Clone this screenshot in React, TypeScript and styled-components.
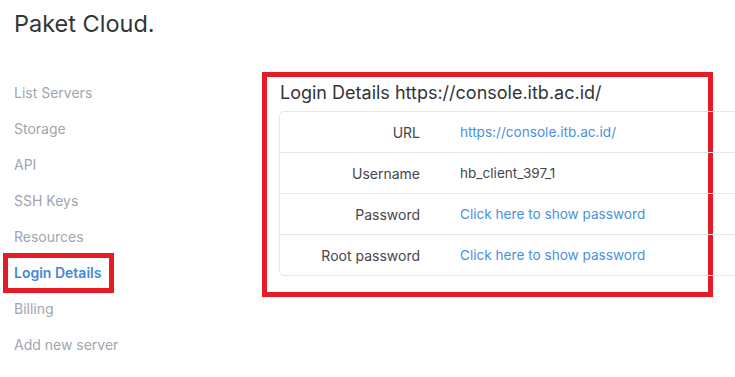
import styled, { createGlobalStyle } from 'styled-components';

const menu = [
  'List Servers',
  'Storage',
  'API',
  'SSH Keys',
  'Resources',
  'Login Details',
  'Billing',
  'Add new server'
];

const details = [
  { label: 'URL', value: 'https://console.itb.ac.id/', link: true },
  { label: 'Username', value: 'hb_client_397_1', link: false },
  { label: 'Password', value: 'Click here to show password', link: true },
  { label: 'Root password', value: 'Click here to show password', link: true }
];

function App() {
  return (
    <>
      <GlobalStyle />
      <Page>
        <Header>Paket Cloud.</Header>
        <Layout>
          <Sidebar>
            {menu.map((item) => (
              <MenuItem key={item} $active={item === 'Login Details'}>
                {item}
              </MenuItem>
            ))}
          </Sidebar>
          <Highlight>
            <CardTitle>Login Details https://console.itb.ac.id/</CardTitle>
            <Table>
              {details.map((row) => (
                <Row key={row.label}>
                  <Label>{row.label}</Label>
                  <Value $link={row.link}>{row.value}</Value>
                </Row>
              ))}
            </Table>
          </Highlight>
        </Layout>
      </Page>
    </>
  );
}

const GlobalStyle = createGlobalStyle`
  body {
    margin: 0;
    background: #ffffff;
    font-family: Inter, "Liberation Sans", sans-serif;
    overflow: hidden;
  }
`;

const Page = styled.div`
  width: 735px;
  height: 377px;
  overflow: hidden;
`;

const Header = styled.h1`
  margin: 0;
  padding: 0 14px;
  height: 72px;
  line-height: 48px;
  font-size: 23.5px;
  font-weight: 400;
  color: #333438;
`;

const Layout = styled.div`
  display: flex;
  align-items: flex-start;
`;

const Sidebar = styled.nav`
  width: 248px;
  padding: 3px 0 0 14px;
  display: flex;
  flex-direction: column;
  align-items: flex-start;
`;

const MenuItem = styled.a<{ $active?: boolean }>`
  display: block;
  height: 36px;
  line-height: 36px;
  font-size: 14px;
  font-weight: ${(p) => (p.$active ? 600 : 400)};
  color: ${(p) => (p.$active ? '#3f88dd' : '#a2a5ae')};
  ${(p) =>
    p.$active &&
    `
    height: 30px;
    line-height: 30px;
    margin: 3px 0 3px -6px;
    padding: 0 8px 0 6px;
    outline: 5px solid #e31c25;
  `}
`;

const Highlight = styled.section`
  width: 451px;
  box-sizing: border-box;
  border: 5px solid #e31c25;
  padding: 3px 0 16px 12px;
`;

const CardTitle = styled.h2`
  margin: 0 0 5px 1px;
  line-height: 26px;
  font-size: 18px;
  font-weight: 400;
  color: #333438;
`;

const Table = styled.div`
  width: 480px;
  border: 1px solid #e6e7ea;
  border-radius: 5px;
`;

const Row = styled.div`
  display: grid;
  grid-template-columns: 160px 1fr;
  height: 40px;
  align-items: center;
  font-size: 14px;
  & + & {
    border-top: 1px solid #e6e7ea;
  }
`;

const Label = styled.span`
  text-align: right;
  padding-right: 20px;
  color: #45464b;
`;

const Value = styled.span<{ $link?: boolean }>`
  padding-left: 20px;
  font-size: 13.6px;
  color: ${(p) => (p.$link ? '#4a8fe0' : '#45464b')};
  cursor: ${(p) => (p.$link ? 'pointer' : 'default')};
`;

export default App;
